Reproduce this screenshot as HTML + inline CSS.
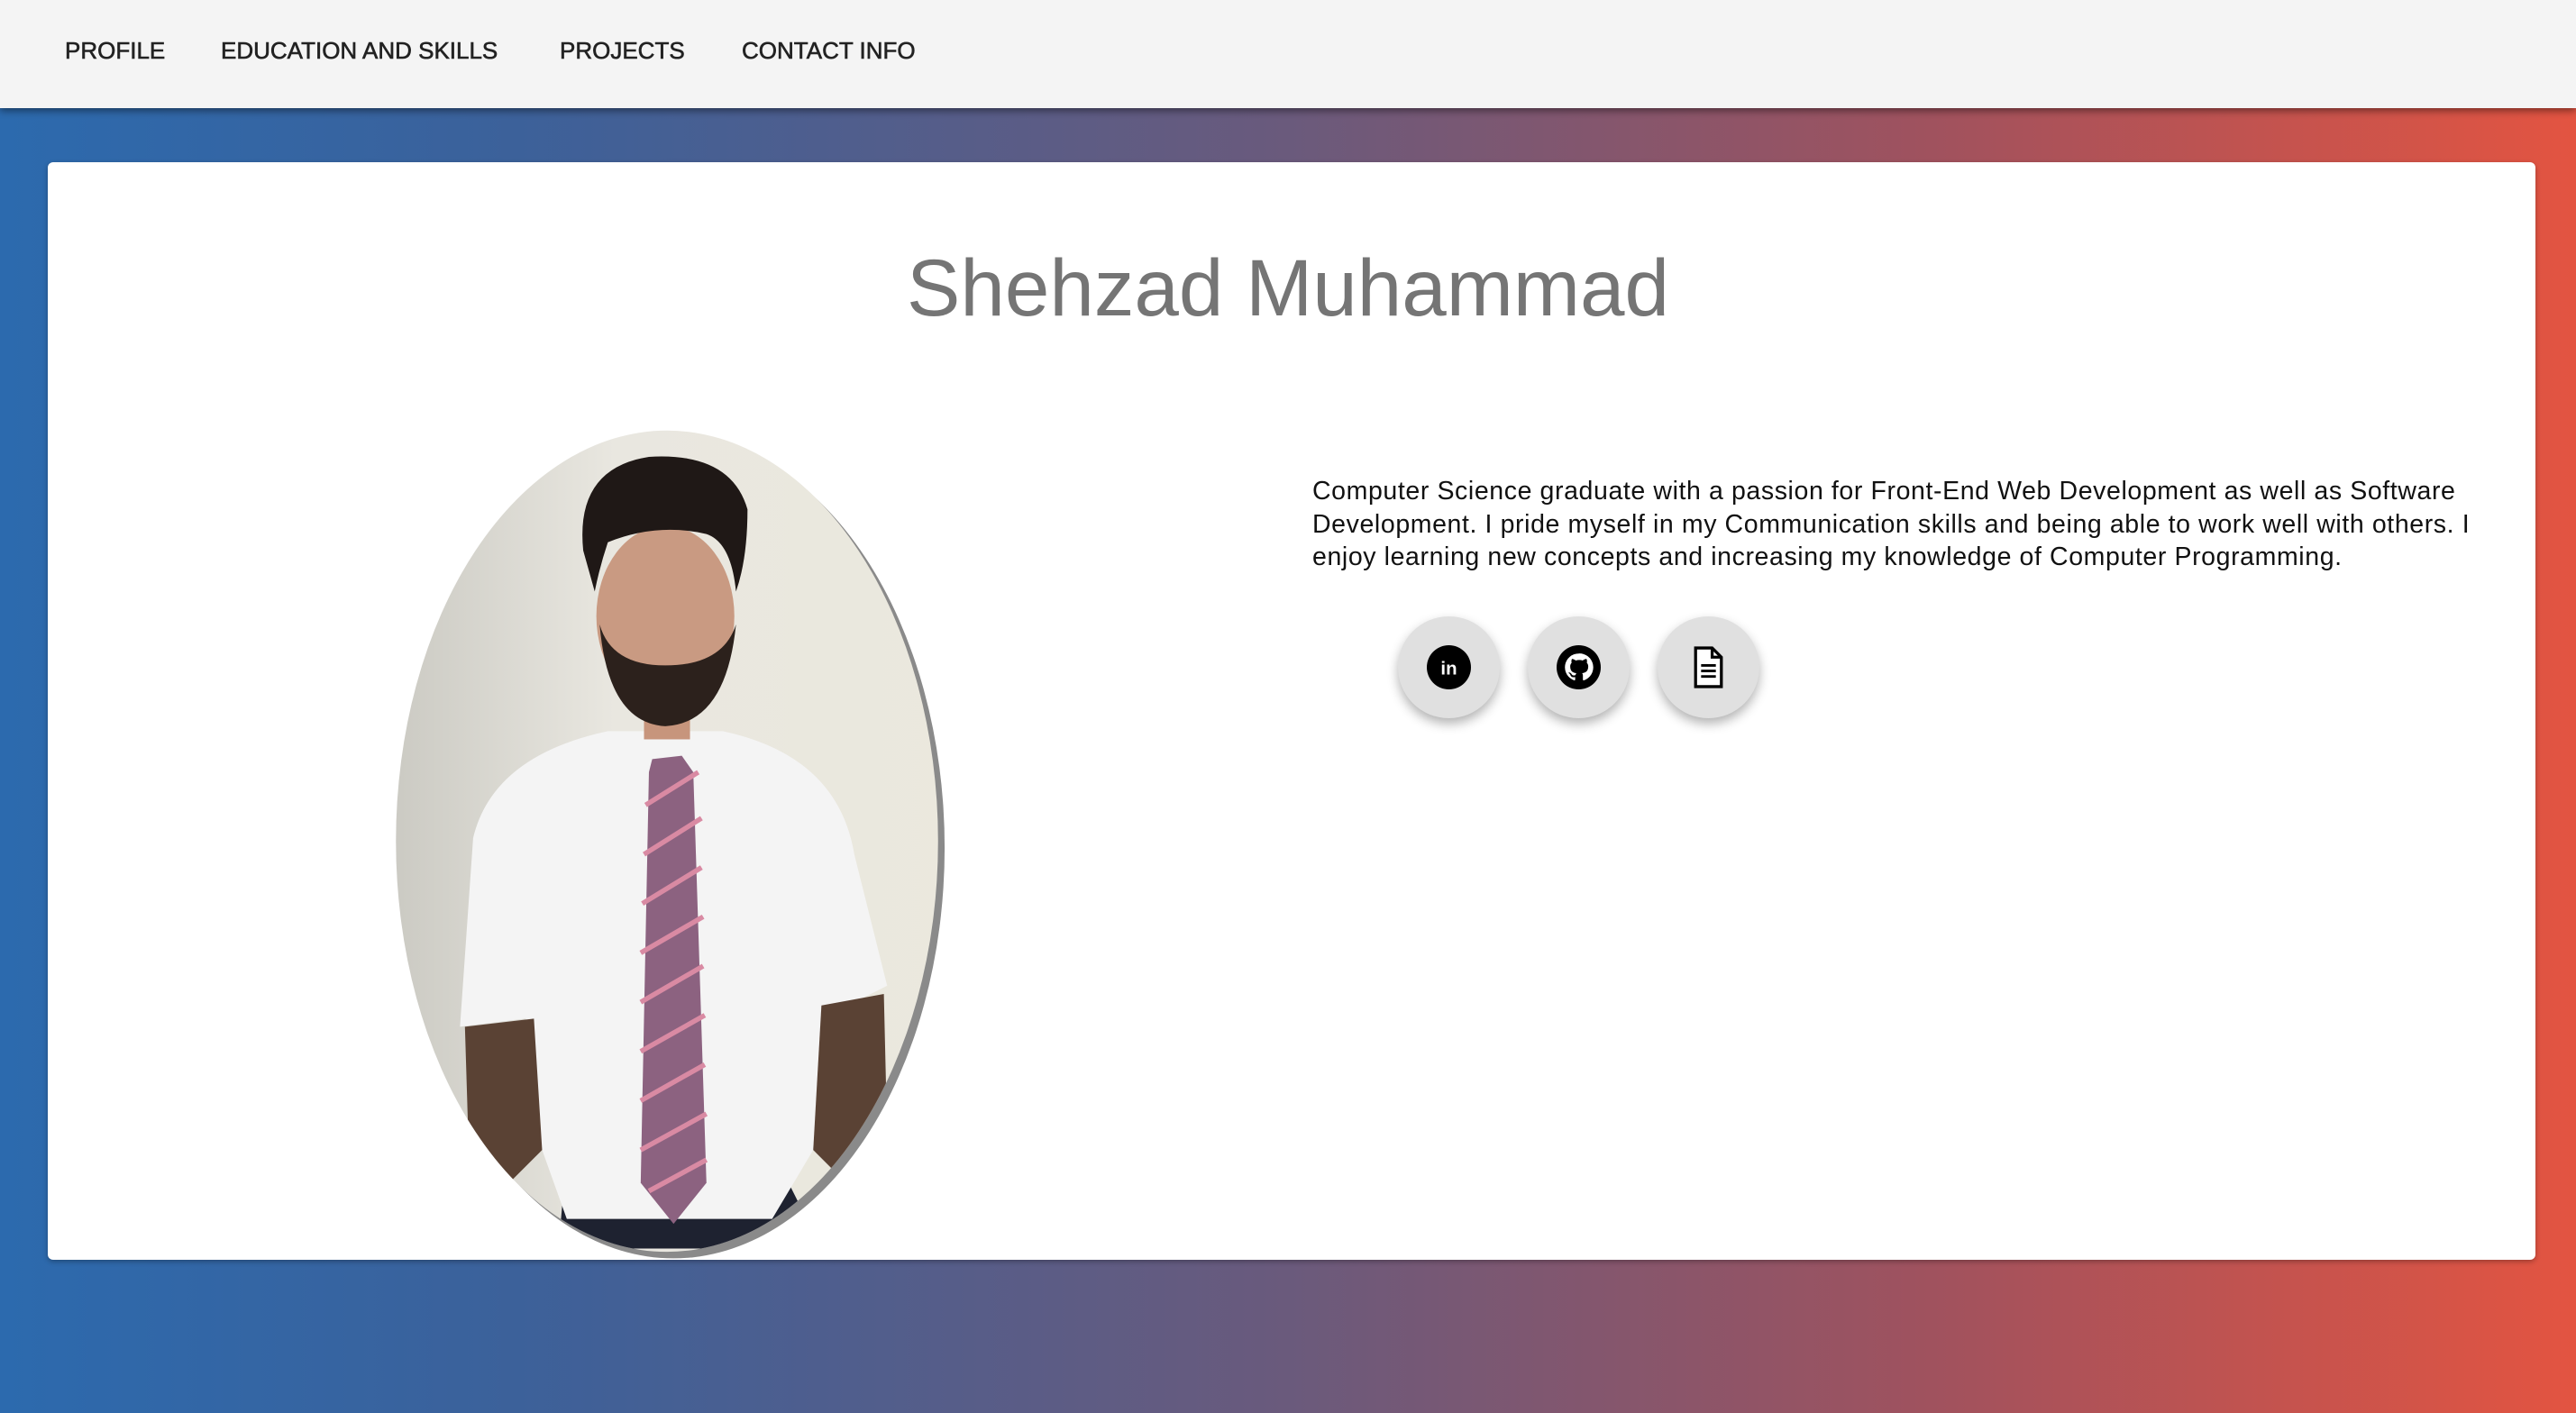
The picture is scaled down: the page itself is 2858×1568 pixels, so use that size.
<!DOCTYPE html>
<html><head><meta charset="utf-8"><style>
html,body{margin:0;padding:0;width:2858px;height:1568px;overflow:hidden;font-family:"Liberation Sans",sans-serif}
body{background:linear-gradient(90deg,#2c6aae 0%,#3c619a 20%,#6a5a7c 50%,#a0525e 75%,#e35441 100%)}
.hdr{position:absolute;left:0;top:0;width:2858px;height:120px;background:#f4f4f4;box-shadow:0 3px 8px rgba(0,0,0,.45);z-index:3}
.hdr span{position:absolute;top:41px;font-size:26px;color:#222;-webkit-text-stroke:0.6px #222}
.card{position:absolute;left:53px;top:180px;width:2760px;height:1218px;background:#fff;border-radius:6px;box-shadow:0 2px 6px rgba(0,0,0,.3)}
h1{position:absolute;left:0;top:268px;width:2858px;text-align:center;margin:0;font-weight:normal;font-size:89px;color:#757575}
.p{position:absolute;left:1456px;top:527px;font-size:28.5px;line-height:36.5px;color:#111;white-space:nowrap;letter-spacing:0.6px}
.b{position:absolute;top:684px;width:113px;height:113px;border-radius:50%;background:#e0e0e0;box-shadow:0 6px 12px rgba(0,0,0,.3)}
.b svg{position:absolute;left:32px;top:32px}
</style></head><body>
<div class="hdr"><span style="left:72px">PROFILE</span><span style="left:245px">EDUCATION AND SKILLS</span><span style="left:621px">PROJECTS</span><span style="left:823px">CONTACT INFO</span></div>
<div class="card"></div>
<h1>Shehzad Muhammad</h1>
<svg style="position:absolute;left:0;top:0" width="2858" height="1568" viewBox="0 0 1568 860">
<defs><clipPath id="c"><ellipse cx="406" cy="512" rx="165" ry="250"/></clipPath>
<linearGradient id="w" x1="0" x2="1"><stop offset="0" stop-color="#c9c8c1"/><stop offset=".4" stop-color="#e9e7e0"/><stop offset="1" stop-color="#ebe8dd"/></linearGradient></defs>
<ellipse cx="410" cy="516" rx="165" ry="250" fill="#8a8a8a"/>
<g clip-path="url(#c)">
<rect x="230" y="250" width="360" height="530" fill="url(#w)"/>
<path d="M340 760 L345 700 L470 700 L500 760Z" fill="#1e2230"/>
<path d="M288 510 Q300 460 370 445 L440 445 Q510 460 520 520 L540 600 L510 615 L495 700 L470 742 L345 742 L330 700 L320 620 L280 625Z" fill="#f4f4f4"/>
<path d="M283 625 L325 620 L330 700 L300 730 L285 690Z" fill="#5a4234"/>
<path d="M500 612 L538 605 L540 690 L515 720 L495 700Z" fill="#5a4234"/>
<rect x="392" y="420" width="28" height="30" fill="#c7957c"/>
<ellipse cx="405" cy="375" rx="42" ry="55" fill="#c99a82"/>
<path d="M365 380 Q370 440 405 442 Q442 440 448 380 Q440 405 405 405 Q372 405 365 380Z" fill="#2c211c"/>
<path d="M355 335 Q350 285 395 278 Q445 275 455 310 Q455 340 448 360 Q445 330 430 325 Q400 318 370 330 Q365 345 362 360Z" fill="#1f1816"/>
<path d="M397 462 L415 460 L422 470 L430 720 L410 745 L390 720 L395 470Z" fill="#8c6280"/>
<g stroke="#d98aa3" stroke-width="3"><line x1="393" y1="490" x2="425" y2="470"/><line x1="392" y1="520" x2="427" y2="498"/><line x1="391" y1="550" x2="427" y2="528"/><line x1="390" y1="580" x2="428" y2="558"/><line x1="390" y1="610" x2="428" y2="588"/><line x1="390" y1="640" x2="429" y2="618"/><line x1="390" y1="670" x2="429" y2="648"/><line x1="390" y1="700" x2="430" y2="678"/><line x1="395" y1="725" x2="430" y2="706"/></g>
</g>
</svg>
<div class="p">Computer Science graduate with a passion for Front-End Web Development as well as Software<br>Development. I pride myself in my Communication skills and being able to work well with others. I<br>enjoy learning new concepts and increasing my knowledge of Computer Programming.</div>
<div class="b" style="left:1551px"><svg width="49" height="49" viewBox="0 0 24 24"><circle cx="12" cy="12" r="12" fill="#000"/><text x="12" y="16" text-anchor="middle" font-family="Liberation Sans" font-weight="bold" font-size="10" fill="#fff">in</text></svg></div>
<div class="b" style="left:1695px"><svg width="49" height="49" viewBox="0 0 24 24"><circle cx="12" cy="12" r="12" fill="#000"/><path d="M12 4.5a7.5 7.5 0 0 0-2.4 14.6c.4.1.5-.2.5-.4v-1.4c-2.1.5-2.5-.9-2.5-.9-.3-.9-.8-1.1-.8-1.1-.7-.5.1-.5.1-.5.8.1 1.2.8 1.2.8.7 1.2 1.8.8 2.2.6.1-.5.3-.8.5-1-1.7-.2-3.4-.8-3.4-3.7 0-.8.3-1.5.8-2-.1-.2-.3-1 .1-2 0 0 .6-.2 2.1.8a7 7 0 0 1 3.8 0c1.4-1 2.1-.8 2.1-.8.4 1 .2 1.8.1 2 .5.5.8 1.2.8 2 0 2.9-1.8 3.5-3.4 3.7.3.2.5.7.5 1.4v2.1c0 .2.1.5.5.4A7.5 7.5 0 0 0 12 4.5z" fill="#fff"/></svg></div>
<div class="b" style="left:1839px"><svg width="49" height="49" viewBox="0 0 24 24"><path d="M5 1.5h9l5 5v16H5z" fill="#fff" stroke="#000" stroke-width="1.6"/><path d="M14 1.5v5h5" fill="none" stroke="#000" stroke-width="1.6"/><path d="M8 11h8M8 14h8M8 17h8" stroke="#000" stroke-width="1.4"/></svg></div>
</body></html>
